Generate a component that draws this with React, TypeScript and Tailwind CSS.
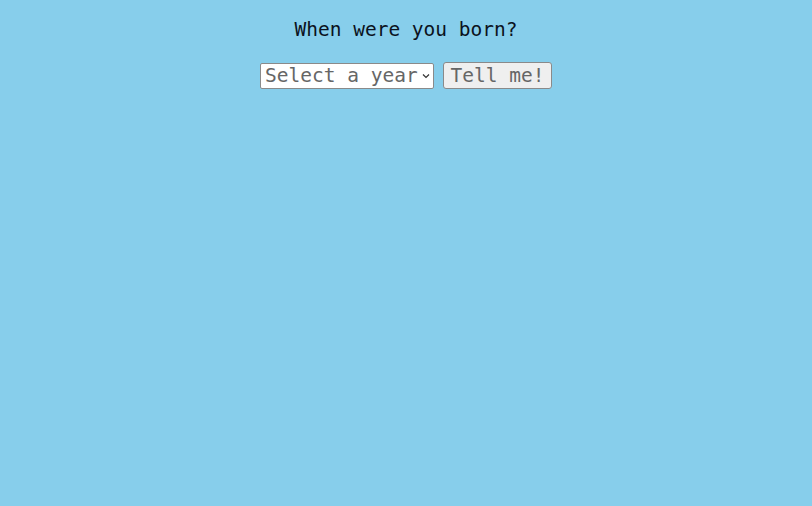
export default function App() {
  return (
    <div
      className="min-h-screen w-full bg-[#87CEEB] flex flex-col items-center pt-[16px]"
      style={{ fontFamily: '"DejaVu Sans Mono", "Liberation Mono", monospace' }}
    >
      <h1 className="text-[19.5px] leading-[28px] text-[#0b1220]">When were you born?</h1>
      <div className="mt-[18px] flex items-center gap-[9px]">
        <div className="relative">
          <select
            defaultValue=""
            className="appearance-none w-[174px] h-[26px] bg-white border border-[#8a8a8a] rounded-[2px] pl-[4px] pr-[14px] text-[19.5px] leading-[24px] text-[#666] outline-none"
            style={{ fontFamily: '"DejaVu Sans Mono", "Liberation Mono", monospace' }}
          >
            <option value="" disabled>
              Select a year
            </option>
            <option>1990</option>
            <option>2000</option>
          </select>
          <svg
            className="absolute right-[4px] top-[10px] pointer-events-none"
            width="8"
            height="6"
            viewBox="0 0 8 6"
          >
            <path d="M1 1.5 L4 4.5 L7 1.5" fill="none" stroke="#333" strokeWidth="1.2" />
          </svg>
        </div>
        <button
          className="w-[109px] h-[27px] bg-[#efefef] border border-[#8a8a8a] rounded-[3px] text-[19.5px] leading-[24px] text-[#666]"
          style={{ fontFamily: '"DejaVu Sans Mono", "Liberation Mono", monospace' }}
        >
          Tell me!
        </button>
      </div>
    </div>
  );
}
